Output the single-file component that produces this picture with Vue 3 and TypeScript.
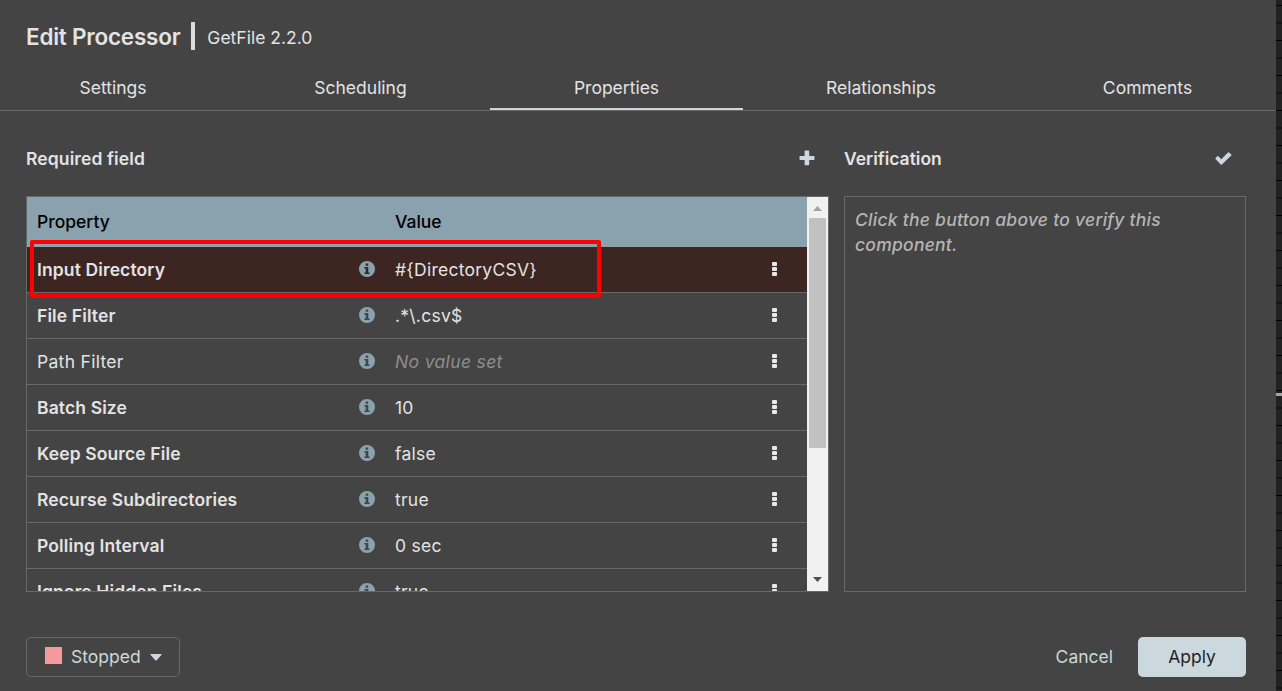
<script setup lang="ts">
interface Property {
  name: string
  value: string | null
  required: boolean
  invalid?: boolean
}

const tabs: string[] = ['Settings', 'Scheduling', 'Properties', 'Relationships', 'Comments']
const activeTab = 'Properties'

const properties: Property[] = [
  { name: 'Input Directory', value: '#{DirectoryCSV}', required: true, invalid: true },
  { name: 'File Filter', value: '.*\\.csv$', required: true },
  { name: 'Path Filter', value: null, required: false },
  { name: 'Batch Size', value: '10', required: true },
  { name: 'Keep Source File', value: 'false', required: true },
  { name: 'Recurse Subdirectories', value: 'true', required: true },
  { name: 'Polling Interval', value: '0 sec', required: true },
  { name: 'Ignore Hidden Files', value: 'true', required: true },
]
</script>

<template>
  <div class="screen">
    <main class="dialog">
      <header class="title">
        <h2>Edit Processor</h2>
        <span class="divider"></span>
        <span class="type">GetFile 2.2.0</span>
      </header>

      <nav class="tabs">
        <div v-for="tab in tabs" :key="tab" class="tab" :class="{ active: tab === activeTab }">
          <span>{{ tab }}</span>
        </div>
      </nav>

      <div class="content">
        <section class="left">
          <div class="section-head">
            <h3>Required field</h3>
            <svg class="plus" width="16" height="16" viewBox="0 0 16 16">
              <path d="M6.3 .5h3.2q.7 0 .7.7v4.7h4.6q.7 0 .7.7v2.6q0 .7-.7.7h-4.6v4.6q0 .7-.7.7h-3.2q-.7 0-.7-.7v-4.6H1.2q-.7 0-.7-.7v-2.6q0-.7.7-.7h4.400V1.200q0-.7.7-.7z" />
            </svg>
          </div>
          <div class="table">
            <div class="grid">
              <div class="row head">
                <span class="name">Property</span>
                <span class="value">Value</span>
              </div>
              <div v-for="p in properties" :key="p.name" class="row" :class="{ invalid: p.invalid }">
                <span class="name" :class="{ required: p.required }">{{ p.name }}</span>
                <svg class="info" width="16" height="16" viewBox="0 0 16 16">
                  <path fill-rule="evenodd" d="M8 0a8 8 0 1 1 0 16A8 8 0 0 1 8 0zM6.7 2.5v2.2h2.5V2.5zM5.4 6v1.600h1.300v3.800H5.400V13h5.200v-1.600H9.300V6z" />
                </svg>
                <span class="value" :class="{ unset: p.value === null }">{{ p.value ?? 'No value set' }}</span>
                <span class="menu"><i></i><i></i><i></i></span>
              </div>
            </div>
            <div class="scrollbar">
              <svg width="21" height="21" viewBox="0 0 21 21"><path fill="#a3a3a3" d="M6 14h9l-4.500-5z" /></svg>
              <div class="thumb"></div>
              <svg width="21" height="21" viewBox="0 0 21 21"><path fill="#505050" d="M6 7h9l-4.500 5z" /></svg>
            </div>
          </div>
        </section>

        <section class="right">
          <div class="section-head">
            <h3>Verification</h3>
            <svg class="check" width="17" height="13" viewBox="0 0 17 13">
              <path d="M.6 6.900q-.4-.5 0-1l1.700-1.600q.5-.4 1 0l3 2.900L13 .5q.5-.5 1 0l2.300 2.100q.5.500 0 1l-9.400 8.900q-.6.500-1.200 0z" />
            </svg>
          </div>
          <div class="result">Click the button above to verify this component.</div>
        </section>
      </div>

      <footer class="actions">
        <button class="state">
          <span class="stop"></span>
          <span class="state-text">Stopped</span>
          <svg width="12" height="7" viewBox="0 0 12 7"><path d="M1 0h10q1 .2.4 1.100L6.700 6.200q-.7.600-1.400 0L.6 1.100Q0 .2 1 0z" /></svg>
        </button>
        <div class="buttons">
          <button class="cancel">Cancel</button>
          <button class="apply">Apply</button>
        </div>
      </footer>
    </main>
    <aside class="canvas"><div class="connection"></div></aside>
    <div class="highlight"></div>
  </div>
</template>

<style>
body {
  background: #444;
}
</style>

<style scoped>
* {
  box-sizing: border-box;
}
.screen {
  position: relative;
  display: flex;
  width: 1282px;
  height: 691px;
  overflow: hidden;
  font: 400 17.5px/25px Inter, "Liberation Sans", sans-serif;
  color: #e3e3e3;
}
.dialog {
  width: 1276px;
  background: #444;
}
.title {
  display: flex;
  align-items: center;
  height: 66px;
  padding: 6px 26px 0;
}
h2, h3 {
  margin: 0;
  font-weight: 600;
}
h2 {
  padding-top: 1px;
  font-size: 22.5px;
  line-height: 30px;
  letter-spacing: -0.23px;
}
.divider {
  width: 4px;
  height: 28px;
  margin: 0 12px 0 11px;
  background: #dcdcdc;
}
.type {
  padding-top: 3px;
}
.tabs {
  display: grid;
  grid-template-columns: 227px 263px 253px 276px 257px;
  height: 45px;
  border-bottom: 1px solid #686868;
}
.tab {
  display: flex;
  justify-content: center;
  padding-top: 9px;
}
.tab:first-child {
  padding-right: 1px;
}
.tab:nth-child(2) {
  padding-left: 4px;
}
.tab.active {
  border-bottom: 2px solid #cbd8de;
}
.content {
  display: flex;
  gap: 15px;
  padding: 35px 26px 0;
}
.left {
  width: 803px;
}
.right {
  width: 402px;
}
.section-head {
  display: flex;
  justify-content: space-between;
  align-items: center;
  height: 25px;
  margin-bottom: 25px;
}
h3 {
  font-size: 17.5px;
}
.left h3 {
  letter-spacing: 0.12px;
}
.plus {
  margin: -2px 14px 0 0;
  fill: #cbd8de;
}
.check {
  margin-right: 14px;
  fill: #cbd8de;
}
.table {
  display: flex;
  height: 396px;
  border: 1px solid #686868;
  overflow: hidden;
}
.grid {
  width: 780px;
}
.row {
  display: grid;
  grid-template-columns: 322px 36px 377px 1fr;
  align-items: center;
  height: 46px;
  padding-left: 10px;
  border-bottom: 1px solid #686868;
}
.row.head {
  grid-template-columns: 358px 1fr;
  height: 50px;
  padding-bottom: 2px;
  border: 0;
  background: #8aa2ae;
  color: #000;
  font-weight: 500;
}
.row.invalid {
  background: #3d2522;
}
.name {
  letter-spacing: 0.3px;
}
.head .name {
  letter-spacing: 0;
}
.name.required {
  font-weight: 600;
  letter-spacing: 0.12px;
}
.info {
  margin-top: -2px;
  fill: #8aa2ae;
}
.value {
  letter-spacing: 0.25px;
}
.head .value {
  letter-spacing: 0;
}
.unset {
  color: #8e8e8e;
  font-style: italic;
  letter-spacing: 0.35px;
}
.menu {
  display: grid;
  gap: 1px;
  width: 5px;
  margin-top: -2px;
}
.menu i {
  height: 4px;
  border-radius: 1px;
  background: #e8e8e8;
}
.scrollbar {
  display: flex;
  flex-direction: column;
  width: 21px;
  background: #f1f1f1;
}
.thumb {
  width: 17px;
  height: 230px;
  margin: 0 2px auto;
  background: #c1c1c1;
}
.result {
  height: 396px;
  padding: 10px;
  border: 1px solid #686868;
  color: #b5b5b5;
  font-style: italic;
  font-weight: 500;
  letter-spacing: 0.25px;
}
.actions {
  display: flex;
  justify-content: space-between;
  padding: 45px 30px 0 26px;
}
button {
  height: 40px;
  padding: 0 0 2px;
  border: 0;
  border-radius: 5px;
  background: transparent;
  color: #cbd8de;
  font: inherit;
}
.state {
  display: flex;
  align-items: center;
  width: 154px;
  padding-left: 18px;
  border: 1px solid #686868;
}
.stop {
  width: 17px;
  height: 17px;
  margin: -1px 9px 0 0;
  background: #f49a98;
}
.state svg {
  margin: 2px 0 0 9px;
  fill: #cbd8de;
}
.buttons {
  display: flex;
  gap: 25px;
}
.apply {
  width: 108px;
  background: #cbd8de;
  color: #1f1f1f;
}
.canvas {
  width: 6px;
  padding-top: 393px;
  background: repeating-linear-gradient(#222 0 5px, #000 5px 6px, #222 6px 22px, #151515 22px 24px, #222 24px 35px);
}
.connection {
  height: 3px;
  background: #a4a4a4;
}
.highlight {
  position: absolute;
  left: 30px;
  top: 240px;
  width: 571px;
  height: 58px;
  border: 4px solid #f00;
  border-radius: 2px;
}
</style>
